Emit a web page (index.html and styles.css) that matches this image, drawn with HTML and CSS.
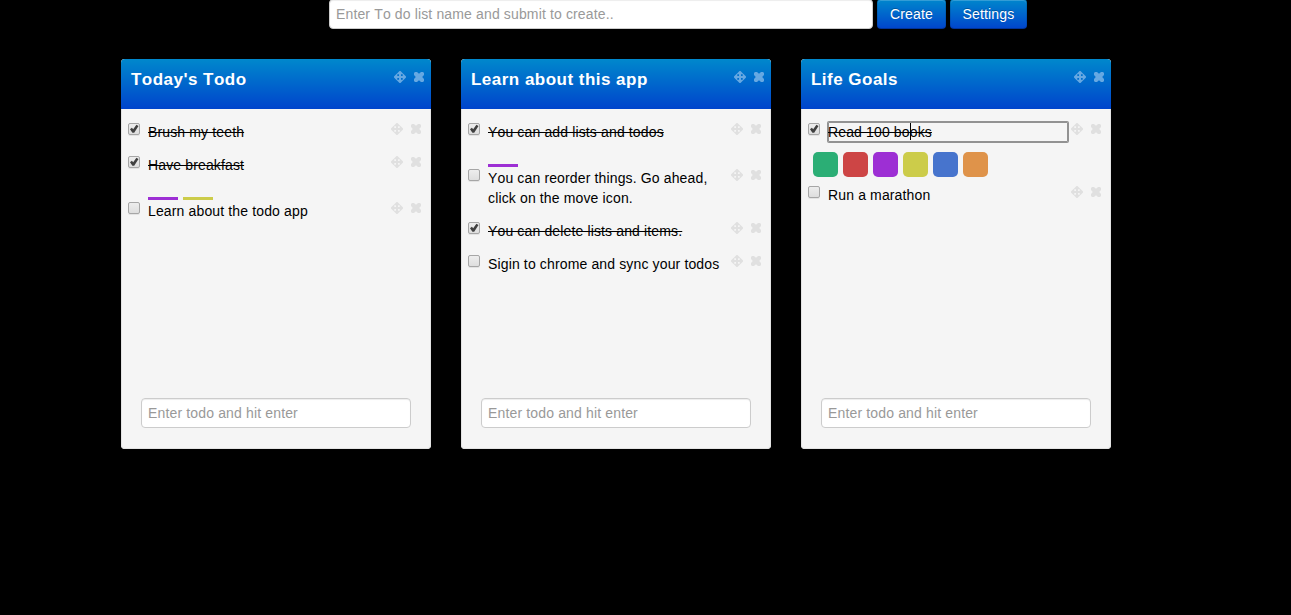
FILE: index.html
```html
<!DOCTYPE html>
<html lang="en">
<head>
<meta charset="utf-8">
<title>Todo lists</title>
<link rel="stylesheet" href="styles.css">
</head>
<body>
<svg class="defs" aria-hidden="true">
  <symbol id="move" viewBox="0 0 12 12"><path d="M5.5 0h1L9.2 2.7v.6H7V5H8.7V2.8h.6L12 5.5v1L9.3 9.2h-.6V7H7V8.7H9.2v.6L6.5 12h-1L2.8 9.3v-.6H5V7H3.3V9.2h-.6L0 6.5v-1L2.7 2.8h.6V5H5V3.3H2.8v-.6Z"/></symbol>
  <symbol id="remove" viewBox="0 0 10 10"><path d="M1 0H3L5 1.8 7 0H9L10 1V3L8.2 5 10 7V9L9 10H7L5 8.2 3 10H1L0 9V7L1.8 5 0 3V1Z"/></symbol>
  <symbol id="check" viewBox="0 0 12 12"><path d="M2 6.2 3.9 4.8 5.2 6.3 8.4 1.8 10.5 3 6.2 9.8H4.4Z"/></symbol>
</svg>
<form class="create">
  <input class="field create-name" type="text" placeholder="Enter To do list name and submit to create..">
  <button class="btn btn-create" type="button">Create</button>
  <button class="btn btn-settings" type="button">Settings</button>
</form>
<main class="lists">
  <section class="list">
    <header class="list-head"><h4>Today's Todo</h4><div class="tools"><svg class="move"><use href="#move"/></svg><svg class="remove"><use href="#remove"/></svg></div></header>
    <ul class="items">
      <li class="item done"><span class="box"><svg><use href="#check"/></svg></span><div class="text">Brush my teeth</div><div class="tools"><svg class="move"><use href="#move"/></svg><svg class="remove"><use href="#remove"/></svg></div></li>
      <li class="item done"><span class="box"><svg><use href="#check"/></svg></span><div class="text">Have breakfast</div><div class="tools"><svg class="move"><use href="#move"/></svg><svg class="remove"><use href="#remove"/></svg></div></li>
      <li class="labels"><i class="purple"></i><i class="yellow"></i></li>
      <li class="item"><span class="box"></span><div class="text">Learn about the todo app</div><div class="tools"><svg class="move"><use href="#move"/></svg><svg class="remove"><use href="#remove"/></svg></div></li>
    </ul>
    <input class="field add" type="text" placeholder="Enter todo and hit enter">
  </section>
  <section class="list">
    <header class="list-head"><h4>Learn about this app</h4><div class="tools"><svg class="move"><use href="#move"/></svg><svg class="remove"><use href="#remove"/></svg></div></header>
    <ul class="items">
      <li class="item done"><span class="box"><svg><use href="#check"/></svg></span><div class="text">You can add lists and todos</div><div class="tools"><svg class="move"><use href="#move"/></svg><svg class="remove"><use href="#remove"/></svg></div></li>
      <li class="labels"><i class="purple"></i></li>
      <li class="item"><span class="box"></span><div class="text">You can reorder things. Go ahead, click on the move icon.</div><div class="tools"><svg class="move"><use href="#move"/></svg><svg class="remove"><use href="#remove"/></svg></div></li>
      <li class="item done"><span class="box"><svg><use href="#check"/></svg></span><div class="text">You can delete lists and items.</div><div class="tools"><svg class="move"><use href="#move"/></svg><svg class="remove"><use href="#remove"/></svg></div></li>
      <li class="item"><span class="box"></span><div class="text">Sigin to chrome and sync your todos</div><div class="tools"><svg class="move"><use href="#move"/></svg><svg class="remove"><use href="#remove"/></svg></div></li>
    </ul>
    <input class="field add" type="text" placeholder="Enter todo and hit enter">
  </section>
  <section class="list">
    <header class="list-head"><h4>Life Goals</h4><div class="tools"><svg class="move"><use href="#move"/></svg><svg class="remove"><use href="#remove"/></svg></div></header>
    <ul class="items">
      <li class="item done"><span class="box"><svg><use href="#check"/></svg></span><div class="text editing">Read 100 books<span class="caret"></span></div><div class="tools"><svg class="move"><use href="#move"/></svg><svg class="remove"><use href="#remove"/></svg></div></li>
      <li class="swatches"><i class="green"></i><i class="red"></i><i class="purple"></i><i class="yellow"></i><i class="blue"></i><i class="orange"></i></li>
      <li class="item"><span class="box"></span><div class="text">Run a marathon</div><div class="tools"><svg class="move"><use href="#move"/></svg><svg class="remove"><use href="#remove"/></svg></div></li>
    </ul>
    <input class="field add" type="text" placeholder="Enter todo and hit enter">
  </section>
</main>
</body>
</html>
```

FILE: styles.css
```css
* { box-sizing: border-box; }
body {
  margin: 0;
  background: #000;
  color: #000;
  font: 14px/20px "Liberation Sans", Arial, sans-serif;
  font-kerning: none;
  letter-spacing: .14px;
  overflow: hidden;
}
.defs { display: none; }
.create {
  display: flex;
  gap: 4px;
  margin: -1px 0 0 329px;
}
.field {
  height: 30px;
  padding: 4px 6px;
  border: 1px solid #ccc;
  border-radius: 4px;
  background: #fff;
  box-shadow: inset 0 1px 1px rgba(0, 0, 0, .075);
  font: inherit;
  font-kerning: none;
  letter-spacing: .15px;
  outline: none;
}
.field::placeholder { color: #999; opacity: 1; }
.create-name { width: 544px; letter-spacing: .14px; }
.btn {
  height: 30px;
  padding: 4px 0;
  border: 1px solid;
  border-color: rgba(0, 0, 0, .1) rgba(0, 0, 0, .1) rgba(0, 0, 0, .25);
  border-radius: 4px;
  background: linear-gradient(#08c, #04c) border-box;
  box-shadow: inset 0 1px 0 rgba(255, 255, 255, .2);
  color: #fff;
  font: inherit;
  letter-spacing: .15px;
  text-shadow: 0 -1px 0 rgba(0, 0, 0, .25);
}
.btn-create { width: 69px; }
.btn-settings { width: 77px; }
.lists {
  display: flex;
  gap: 30px;
  margin: 30px 0 0 121px;
}
.list {
  display: flex;
  flex-direction: column;
  width: 310px;
  height: 390px;
  border-radius: 4px;
  background: #f5f5f5;
  box-shadow: inset 0 0 0 1px #e3e3e3;
  overflow: hidden;
}
.list-head {
  display: flex;
  justify-content: space-between;
  height: 50px;
  padding: 10px 7px 0 10px;
  background: linear-gradient(#08c, #04c);
}
h4 {
  margin: 0;
  padding-top: 1px;
  color: #fff;
  font-size: 17px;
  line-height: 20px;
  letter-spacing: .48px;
}
.tools {
  display: flex;
  align-items: center;
  gap: 8px;
  height: 12px;
  flex: none;
  fill: #e0e0e0;
}
.list-head .tools { margin-top: 2px; fill: #66a8e2; }
.move { width: 12px; height: 12px; }
.remove { width: 10px; height: 10px; }
.items {
  display: flex;
  flex-direction: column;
  flex: 1;
  margin: 0;
  padding: 13px 10px 0 7px;
  list-style: none;
}
.item {
  display: flex;
  margin-bottom: 13px;
}
.item .tools { margin-top: 1px; }
.box {
  flex: none;
  width: 12px;
  height: 12px;
  margin: 1px 8px 0 0;
  border: 1px solid #a6a6a6;
  border-radius: 2px;
  background: linear-gradient(#ededed, #dedede);
  box-shadow: 0 1px 0 rgba(0, 0, 0, .07);
}
.box svg {
  display: block;
  width: 12px;
  height: 12px;
  margin: -1px;
  fill: #404040;
}
.text { width: 240px; margin-right: 3px; }
.done .text { text-decoration: line-through; }
.editing {
  position: relative;
  border-radius: 1px;
  box-shadow: 0 0 0 1px #929292, inset 0 0 0 1px #929292;
}
.caret {
  position: absolute;
  top: 1px;
  left: 82px;
  width: 1px;
  height: 17px;
  background: #000;
}
.labels {
  display: flex;
  gap: 5px;
  padding: 9px 0 1px 20px;
}
.labels i { width: 30px; height: 3px; }
.swatches {
  display: flex;
  gap: 5px;
  margin: -3px 0 8px 5px;
}
.swatches i { width: 25px; height: 25px; border-radius: 5px; }
.green { background: #2bae75; }
.red { background: #cd4545; }
.purple { background: #9d2fd4; }
.yellow { background: #cccc4a; }
.blue { background: #4774cd; }
.orange { background: #df934a; }
.add { width: 270px; margin: 0 20px 21px; }
```
